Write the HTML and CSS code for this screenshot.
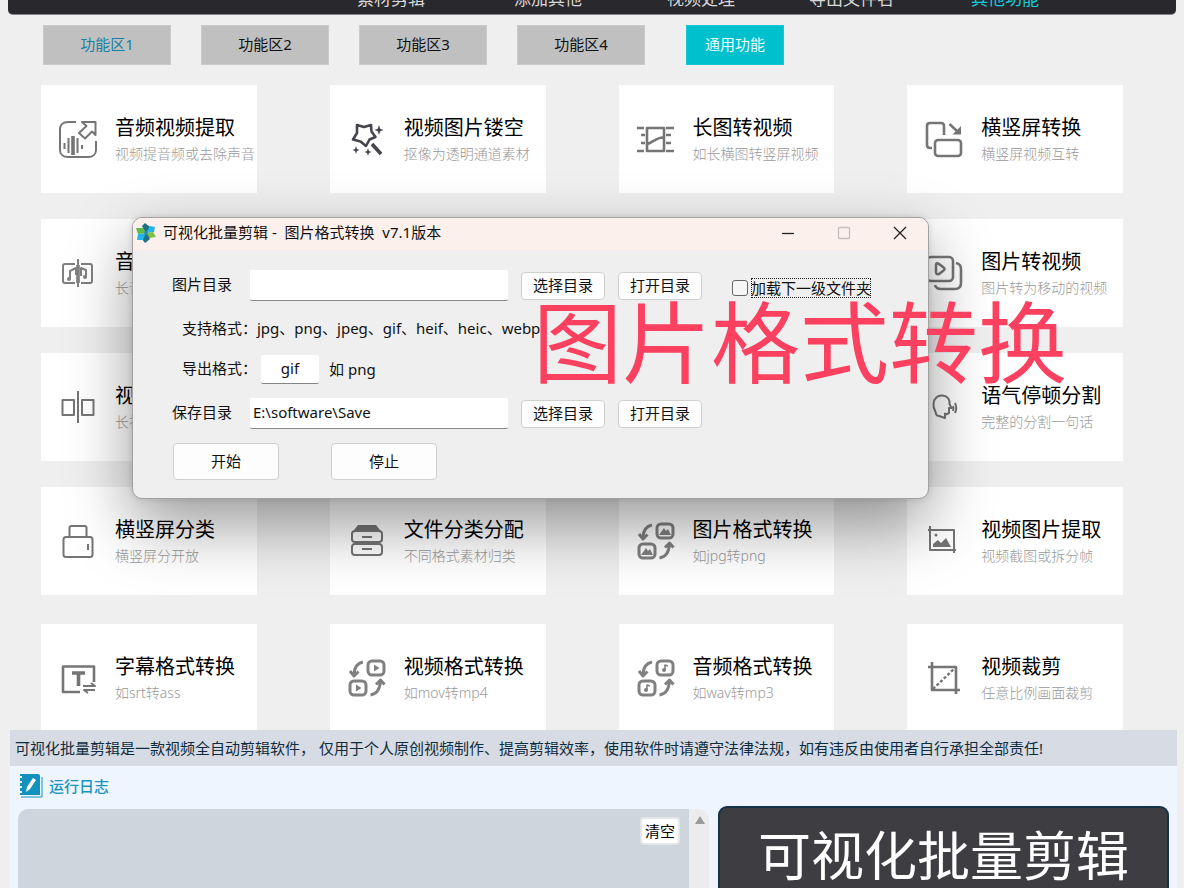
FILE: index.html
```html
<!DOCTYPE html>
<html lang="zh-CN">
<head>
<meta charset="utf-8">
<title>可视化批量剪辑</title>
<link rel="stylesheet" href="styles.css">
</head>
<body>
<svg class="defs" aria-hidden="true">
  <defs>
    <g id="swap-arrows">
      <path d="M16 4C11 5 7.500 9 7 16M3 13L7 18L11.500 13.500"/>
      <path d="M23.500 37C30 36 33 31 33.500 23M29 26.500L33.500 22L37.500 26.500"/>
      <rect x="21" y="3" width="16" height="14" rx="4"/>
      <rect x="3" y="23" width="16" height="14" rx="4"/>
    </g>
  </defs>
</svg>
<div class="app">
  <header class="topbar">
    <nav class="menu">
      <a href="#">素材剪辑</a>
      <a href="#">添加其他</a>
      <a href="#">视频处理</a>
      <a href="#">导出文件名</a>
      <a href="#" class="current">其他功能</a>
    </nav>
  </header>

  <div class="tabs">
    <button class="tab visited">功能区1</button>
    <button class="tab">功能区2</button>
    <button class="tab">功能区3</button>
    <button class="tab">功能区4</button>
    <button class="tab active">通用功能</button>
  </div>

  <main class="cards">
    <div class="grid">
      <article class="card">
        <svg class="icon" viewBox="0 0 40 40"><path d="M18 3H10C5 3 2 6 2 10V31C2 35 5 38 10 38H30C35 38 38 35 38 31V22"/><path d="M24 3H37.500V16L34 12.500L27 19.500L21 14L28.500 7Z"/><path d="M6.500 24V30M10.500 19V34M19.500 19V34M24 26V30"/><path class="thick" d="M15 17V36"/></svg>
        <div><h2>音频视频提取</h2><p>视频提音频或去除声音</p></div>
      </article>
      <article class="card">
        <svg class="icon dark" viewBox="0 0 40 40"><path d="M10 6L17 8L24 6L24.500 12.500L28.500 18L22.500 20.500L19 27L13.500 22.500L6 20.500L10 14Z"/><path class="thick" d="M25 25L34 35"/><path class="fill" d="M32 6L33.200 9.800L36.500 11L33.200 12.200L32 16L30.800 12.200L27.500 11L30.800 9.800ZM9 27L10 30L12.500 31L10 32L9 35L8 32L5.500 31L8 30ZM21 29L22 32L24.500 33L22 34L21 37L20 34L17.500 33L20 32Z"/></svg>
        <div><h2>视频图片镂空</h2><p>抠像为透明通道素材</p></div>
      </article>
      <article class="card">
        <svg class="icon bold" viewBox="0 0 40 40"><path d="M1 9H8M5 16H9M5 24H9M1 32H8M30 9H38M30 16H35M30 24H35M30 32H38M11 9H28V32H11ZM11 25C16 24 19 19 28 18"/></svg>
        <div><h2>长图转视频</h2><p>如长横图转竖屏视频</p></div>
      </article>
      <article class="card">
        <svg class="icon bold" viewBox="0 0 40 40"><path d="M8 29H6Q3 29 3 26V7Q3 4 6 4H17Q20 4 20 7V16M25.500 5L34 13"/><rect x="11" y="21" width="26" height="16" rx="3"/><path class="fill" d="M37 7V15.500H28.500Z"/></svg>
        <div><h2>横竖屏转换</h2><p>横竖屏视频互转</p></div>
      </article>

      <article class="card">
        <svg class="icon soft" viewBox="0 0 40 40"><path d="M17 11H7Q5 11 5 13V28Q5 30 7 30H17M23 11H32Q34 11 34 13V28Q34 30 32 30H23M20 6V34M12 26V18L18 15V22M28 24V17L23 15V23"/><path class="thick" d="M20 12V30"/><circle class="fill" cx="11" cy="26" r="2"/><circle class="fill" cx="27" cy="24" r="2"/></svg>
        <div><h2>音</h2><p>长音</p></div>
      </article>
      <article class="card"></article>
      <article class="card"></article>
      <article class="card">
        <svg class="icon bold" viewBox="0 0 40 40"><rect x="3" y="4" width="26" height="24" rx="4"/><path d="M32 10Q37 11 37 16V30Q37 36 31 36H17Q12 36 11 32M12 12Q12 9 15 11L19 14Q22 16 19 18L15 21Q12 22 12 19Z"/></svg>
        <div><h2>图片转视频</h2><p>图片转为移动的视频</p></div>
      </article>

      <article class="card">
        <svg class="icon" viewBox="0 0 40 40"><path d="M4.500 13H16V28H4.500ZM24 13H35.500V28H24ZM20 4V36"/></svg>
        <div><h2>视</h2><p>长视</p></div>
      </article>
      <article class="card"></article>
      <article class="card"></article>
      <article class="card">
        <svg class="icon" viewBox="0 0 40 40"><path d="M12 28C13 25 9 23 9.500 17C10 11 14 8 18.500 8.500C24 9 26 13 25.500 17L27.500 21H25V26Q23 28 21 26.500V31L12 28M29 19Q30 21 29 24M31 16Q33.500 21 31 26"/></svg>
        <div><h2>语气停顿分割</h2><p>完整的分割一句话</p></div>
      </article>

      <article class="card">
        <svg class="icon" viewBox="0 0 40 40"><path d="M11.500 16V7Q11.500 5 13.500 5H26.500Q28.500 5 28.500 7V16M30 23V29"/><rect x="5.500" y="16" width="29" height="20" rx="2.500"/></svg>
        <div><h2>横竖屏分类</h2><p>横竖屏分开放</p></div>
      </article>
      <article class="card">
        <svg class="icon" viewBox="0 0 40 40"><path class="fill" d="M11 4H29L33 9H7Z"/><rect x="5" y="10" width="30" height="11" rx="3"/><rect x="5" y="23" width="30" height="11" rx="3"/><path d="M15 16H25M15 28H25"/></svg>
        <div><h2>文件分类分配</h2><p>不同格式素材归类</p></div>
      </article>
      <article class="card">
        <svg class="icon soft heavy" viewBox="0 0 40 40"><use href="#swap-arrows"/><path class="fill" d="M23 14L28 7L30 10L32 8L35 14ZM5 34L10 27L12 30L14 28L17 34Z"/></svg>
        <div><h2>图片格式转换</h2><p>如jpg转png</p></div>
      </article>
      <article class="card">
        <svg class="icon" viewBox="0 0 40 40"><path d="M4 9H30V32M6 5V29H32"/><path class="fill" d="M9 26V23L14 19L17 22L22 17L27 26Z"/><circle class="fill" cx="12" cy="14" r="1.500"/></svg>
        <div><h2>视频图片提取</h2><p>视频截图或拆分帧</p></div>
      </article>
    </div>

    <div class="grid last">
      <article class="card">
        <svg class="icon" viewBox="0 0 40 40"><path class="frame" d="M22 34H5V8.500H36V24"/><path d="M25 28H37L33 25M37 32H26L30 35"/><path class="thick" d="M14 15H27M20.500 15V28"/></svg>
        <div><h2>字幕格式转换</h2><p>如srt转ass</p></div>
      </article>
      <article class="card">
        <svg class="icon soft heavy" viewBox="0 0 40 40"><use href="#swap-arrows"/><path class="fill" d="M27 6.500V13.500L32.500 10ZM9 26.500V33.500L14.500 30Z"/></svg>
        <div><h2>视频格式转换</h2><p>如mov转mp4</p></div>
      </article>
      <article class="card">
        <svg class="icon soft heavy" viewBox="0 0 40 40"><use href="#swap-arrows"/><path class="thin" d="M29 12V7L32 8M11 32V27L14 28"/><circle class="fill" cx="28" cy="12" r="2"/><circle class="fill" cx="10" cy="32" r="2"/></svg>
        <div><h2>音频格式转换</h2><p>如wav转mp3</p></div>
      </article>
      <article class="card">
        <svg class="icon" viewBox="0 0 40 40"><path class="frame" d="M4 9H32V36M8 4V32H36"/><path class="dashes" d="M9 31L31 10"/></svg>
        <div><h2>视频裁剪</h2><p>任意比例画面裁剪</p></div>
      </article>
    </div>
  </main>

  <p class="notice">可视化批量剪辑是一款视频全自动剪辑软件， 仅用于个人原创视频制作、提高剪辑效率，使用软件时请遵守法律法规，如有违反由使用者自行承担全部责任!</p>

  <footer class="bottom">
    <label class="log-title" for="log">
      <svg class="log-icon" viewBox="0 0 24 24"><path d="M23 3V23H2" fill="none" stroke="#1392bd"/><path d="M1 0H19Q21 0 21 2V21H1V19H3V17H1V14H3V12H1V9H3V7H1V4H3V2H1Z" fill="#1392bd"/><path d="M7 18L8 13L14 4L17 6L11 15Z" fill="#fff"/></svg>
      运行日志
    </label>
    <div class="panels">
      <div class="log-box">
        <textarea id="log" class="log" readonly></textarea>
        <div class="scroll"><svg viewBox="0 0 12 10"><path d="M6 1L11 9H1Z" fill="#9b9b9b"/></svg></div>
        <button class="clear">清空</button>
      </div>
      <div class="banner">可视化批量剪辑</div>
    </div>
  </footer>

  <section class="dialog" role="dialog" aria-labelledby="dialog-title">
    <div class="titlebar">
      <svg class="app-icon" viewBox="0 0 20 20"><path d="M10 11L6 3L9 0L14 4Z" fill="#1f6f86"/><path d="M10 10L14 3L19 4L18 9Z" fill="#25b4e8"/><path d="M9 10L17 9L20 14L13 15Z" fill="#7cc142"/><path d="M10 9L14 16L9 20L6 16Z" fill="#1f6f86"/><path d="M10 10L7 17L1 17L2 11Z" fill="#25b4e8"/><path d="M10 10L2 11L0 5L7 5Z" fill="#5cb946"/><circle cx="10" cy="10" r="2" fill="#2b8fb0"/></svg>
      <span id="dialog-title" class="title">可视化批量剪辑 -&nbsp; 图片格式转换&nbsp; v7.1版本</span>
      <button class="win" aria-label="最小化"><svg viewBox="0 0 14 14"><path d="M1 7.500H13"/></svg></button>
      <button class="win off" aria-label="最大化" disabled><svg viewBox="0 0 14 14"><rect x="1.500" y="1.500" width="11" height="11" rx="1"/></svg></button>
      <button class="win" aria-label="关闭"><svg viewBox="0 0 14 14"><path d="M1 1L13 13M13 1L1 13"/></svg></button>
    </div>
    <form class="form">
      <div class="row">
        <label class="name" for="src">图片目录</label>
        <input id="src" class="field" type="text">
        <button type="button" class="btn">选择目录</button>
        <button type="button" class="btn">打开目录</button>
        <label class="check"><input type="checkbox"><span>加载下一级文件夹</span></label>
      </div>
      <div class="row inset info">支持格式：jpg、png、jpeg、gif、heif、heic、webp</div>
      <div class="row inset">
        <label class="name short" for="fmt">导出格式：</label>
        <input id="fmt" class="field small" type="text" value="gif">
        <span class="hint">如 png</span>
      </div>
      <div class="row">
        <label class="name" for="dst">保存目录</label>
        <input id="dst" class="field" type="text" value="E:\software\Save">
        <button type="button" class="btn">选择目录</button>
        <button type="button" class="btn">打开目录</button>
      </div>
      <div class="row actions">
        <button type="button" class="btn big">开始</button>
        <button type="button" class="btn big">停止</button>
      </div>
    </form>
  </section>

  <div class="caption">图片格式转换</div>
</div>
</body>
</html>
```
FILE: styles.css
```css
* {
  box-sizing: border-box;
}

body {
  margin: 0;
  background: #efefef;
  color: #111;
  font: 15px/20px "Noto Sans", "Noto Sans CJK SC", sans-serif;
}

button,
input,
textarea {
  font: inherit;
  color: inherit;
}

h2,
p {
  margin: 0;
}

.defs {
  position: absolute;
  width: 0;
  height: 0;
}

.app {
  position: relative;
  display: flex;
  flex-direction: column;
  height: 100vh;
  min-height: 888px;
  overflow: hidden;
}

/* top menu */
.topbar {
  display: flex;
  align-items: flex-end;
  height: 15px;
  margin: 0 8px;
  padding: 0 0 3px 349px;
  overflow: hidden;
  background: #29282d;
  border-bottom: 1px solid #858589;
  border-radius: 0 0 5px 5px;
}

.menu {
  display: grid;
  flex: 1;
  grid-template-columns: 157px 153px 142px 162px auto;
}

.menu a {
  color: #d8d8d8;
  font-size: 17px;
  line-height: 24px;
  text-decoration: none;
  white-space: nowrap;
}

.menu .current {
  color: #12cfd9;
}

/* tabs */
.tabs {
  display: flex;
  gap: 30px;
  padding: 10px 43px 20px;
}

.tab {
  width: 128px;
  height: 40px;
  padding: 0 0 2px;
  border: 1px solid #cacaca;
  background: #c0c0c0;
}

.tab.visited {
  color: #1682a6;
}

.tab.active {
  width: 98px;
  margin-left: 11px;
  border-color: #19c8d4;
  background: #00c0cd;
  color: #e8fdff;
}

/* feature cards */
.grid {
  display: grid;
  grid-template-columns: repeat(4, 1fr);
  gap: 26px 73px;
  padding: 0 61px 0 41px;
}

.grid.last {
  margin-top: 29px;
}

.card {
  display: flex;
  gap: 17px;
  min-height: 108px;
  padding: 29px 0 0 17px;
  background: #fff;
  white-space: nowrap;
}

.last .card {
  min-height: 106px;
}

.card h2 {
  font-size: 20px;
  font-weight: 400;
  line-height: 28px;
  color: #000;
}

.card p {
  font-size: 14px;
  font-weight: 300;
  line-height: 24px;
  color: #999;
}

.icon {
  flex: none;
  width: 40px;
  height: 40px;
  margin-top: 5px;
  overflow: visible;
  color: #757575;
  fill: none;
  stroke: currentColor;
  stroke-width: 2;
  stroke-linejoin: round;
}

.icon.dark {
  color: #45454f;
  stroke-width: 2.6;
}

.icon.soft {
  color: #808080;
}

.icon.bold {
  stroke-width: 2.6;
}

.icon.heavy {
  stroke-width: 3;
}

.icon .thick {
  stroke-width: 3.6;
}

.icon .thin {
  stroke-width: 1.6;
}

.icon .frame {
  stroke-width: 2.6;
}

.icon .dashes {
  stroke-width: 2.4;
  stroke-dasharray: 3 2;
}

.icon .fill {
  fill: currentColor;
  stroke: none;
}

/* notice and log */
.notice {
  margin: 0 7px 0 10px;
  padding: 8px 5px;
  background: #d7dbe3;
  color: #0d2c40;
  white-space: nowrap;
}

.bottom {
  display: flex;
  flex: 1;
  flex-direction: column;
  margin: 0 7px 0 10px;
  padding: 6px 8px 0;
  background: #eef5ff;
}

.log-title {
  display: flex;
  align-items: center;
  gap: 6px;
  height: 27px;
  color: #1a94bd;
  font-weight: 500;
}

.log-icon {
  width: 24px;
  height: 24px;
  margin-left: 1px;
}

.panels {
  display: flex;
  flex: 1;
  gap: 9px;
  padding-top: 7px;
}

.log-box {
  position: relative;
  display: flex;
  flex: 1;
  margin-top: 3px;
}

.log {
  flex: 1;
  border: 0;
  border-radius: 10px 0 0 0;
  background: #cfd5dd;
  resize: none;
}

.scroll {
  width: 20px;
  padding: 6px 5px;
  border-radius: 0 10px 0 0;
  background: #ececec;
}

.scroll svg {
  display: block;
  width: 12px;
}

.clear {
  position: absolute;
  top: 8px;
  right: 29px;
  width: 40px;
  height: 28px;
  padding: 0;
  border: 2px solid #e4e6e9;
  border-radius: 4px;
  background: #fff;
  color: #000;
}

.banner {
  width: 451px;
  padding-top: 18px;
  border: 2px solid #173248;
  border-bottom: 0;
  border-radius: 9px 9px 0 0;
  background: #3e3d42;
  color: #fff;
  font-size: 53px;
  line-height: 60px;
  text-align: center;
}

/* converter window */
.dialog {
  position: absolute;
  top: 217px;
  left: 132px;
  width: 797px;
  border: 1px solid #a3a0a0;
  border-radius: 10px;
  background: #efefef;
  box-shadow: 0 26px 64px rgba(0, 0, 0, .4), 0 0 6px rgba(0, 0, 0, .12);
}

.titlebar {
  display: flex;
  align-items: center;
  height: 32px;
  padding: 0 0 2px 3px;
  border-radius: 9px 9px 0 0;
  background: #fcf0ed;
}

.app-icon {
  width: 20px;
  height: 20px;
}

.title {
  flex: 1;
  padding: 0 0 2px 7px;
  white-space: nowrap;
}

.win {
  display: grid;
  place-items: center;
  width: 56px;
  height: 30px;
  padding: 0;
  border: 0;
  background: none;
}

.win svg {
  width: 14px;
  height: 14px;
  fill: none;
  stroke: #222;
  stroke-width: 1.3;
}

.win.off svg {
  stroke: #c6bfbf;
}

.form {
  display: flex;
  flex-direction: column;
  gap: 14px;
  padding: 20px 40px 18px 39px;
}

.row {
  display: flex;
  align-items: center;
  white-space: nowrap;
}

.inset {
  padding-left: 10px;
}

.info {
  height: 26px;
}

.name {
  width: 78px;
  padding-bottom: 3px;
}

.name.short {
  width: 79px;
}

.hint {
  padding-bottom: 2px;
}

.field {
  width: 258px;
  height: 31px;
  margin-right: 13px;
  padding: 0 3px 3px;
  border: 0;
  border-bottom: 1px solid #858585;
  border-radius: 2px;
  background: #fff;
}

.field.small {
  width: 58px;
  height: 29px;
  margin-right: 10px;
  padding-bottom: 2px;
  text-align: center;
}

.btn {
  width: 84px;
  height: 28px;
  margin-right: 13px;
  padding: 0 0 2px;
  border: 1px solid #d0d0d0;
  border-radius: 4px;
  background: #fdfdfd;
}

.btn.big {
  width: 106px;
  height: 37px;
  margin-right: 52px;
}

.actions {
  padding-left: 1px;
}

.check {
  display: flex;
  align-items: center;
  gap: 3px;
  margin-left: 17px;
  padding-top: 5px;
}

.check input {
  appearance: none;
  width: 16px;
  height: 16px;
  margin: 0;
  border: 1px solid #666;
  border-radius: 3px;
  background: #f6f6f6;
}

.check span {
  height: 20px;
  line-height: 20px;
  outline: 1px dotted #222;
  outline-offset: -1px;
}

.caption {
  position: absolute;
  top: 286px;
  left: 533px;
  color: #fb415f;
  font-size: 89px;
  line-height: 112px;
  white-space: nowrap;
}
```
